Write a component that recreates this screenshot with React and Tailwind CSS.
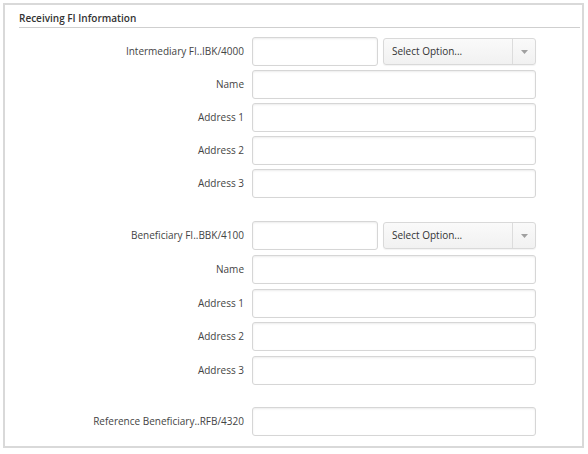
import React from "react";

function TextInput({ className = "" }) {
  return (
    <input
      type="text"
      className={`h-[29px] rounded-[3px] border border-[#d6d6d6] bg-white px-2 text-[11px] text-[#333] shadow-[inset_0_1px_2px_rgba(0,0,0,0.08)] outline-none ${className}`}
    />
  );
}

function SelectBox() {
  return (
    <div className="ml-[5px] flex h-[27px] w-[153px] items-center rounded-[3px] border border-[#d9d9d9] bg-gradient-to-b from-[#fafafa] to-[#f1f1f1] shadow-[0_1px_1px_rgba(0,0,0,0.05)]">
      <span className="flex-1 pl-[8px] text-[10px] text-[#333]">Select Option...</span>
      <span className="flex h-full w-[23px] items-center justify-center border-l border-[#dcdcdc]">
        <svg width="7" height="4" viewBox="0 0 7 4">
          <path d="M0 0 L7 0 L3.5 4 Z" fill="#a0a0a0" />
        </svg>
      </span>
    </div>
  );
}

function Row({ label, select, mt = "mt-[4px]" }) {
  return (
    <div className={`flex items-center ${mt}`}>
      <div className="w-[240px] pr-[1px] text-right text-[10px] text-[#444]">{label}</div>
      <div className="ml-[7px] flex items-center">
        {select ? (
          <>
            <TextInput className="w-[126px]" />
            <SelectBox />
          </>
        ) : (
          <TextInput className="w-[284px]" />
        )}
      </div>
    </div>
  );
}

export default function App() {
  const font = { fontFamily: '"Open Sans", "Noto Sans", sans-serif' };
  return (
    <div className="h-[454px] w-[588px] bg-white pl-[3px] pt-[3px]" style={font}>
      <div className="h-[445px] w-[581px] border-2 border-[#d9d9d9] bg-white">
        <div className="ml-[14px] mr-[2px] mt-[6px] border-b border-[#cfcfcf] pb-[1px] text-[10px] font-semibold text-[#333]">
          Receiving FI Information
        </div>

        <Row label="Intermediary FI..IBK/4000" select mt="mt-[9px]" />
        <Row label="Name" />
        <Row label="Address 1" />
        <Row label="Address 2" />
        <Row label="Address 3" />

        <Row label="Beneficiary FI..BBK/4100" select mt="mt-[23px]" />
        <Row label="Name" mt="mt-[5px]" />
        <Row label="Address 1" mt="mt-[5px]" />
        <Row label="Address 2" mt="mt-[4px]" />
        <Row label="Address 3" mt="mt-[5px]" />

        <Row label="Reference Beneficiary..RFB/4320" mt="mt-[22px]" />
      </div>
    </div>
  );
}
